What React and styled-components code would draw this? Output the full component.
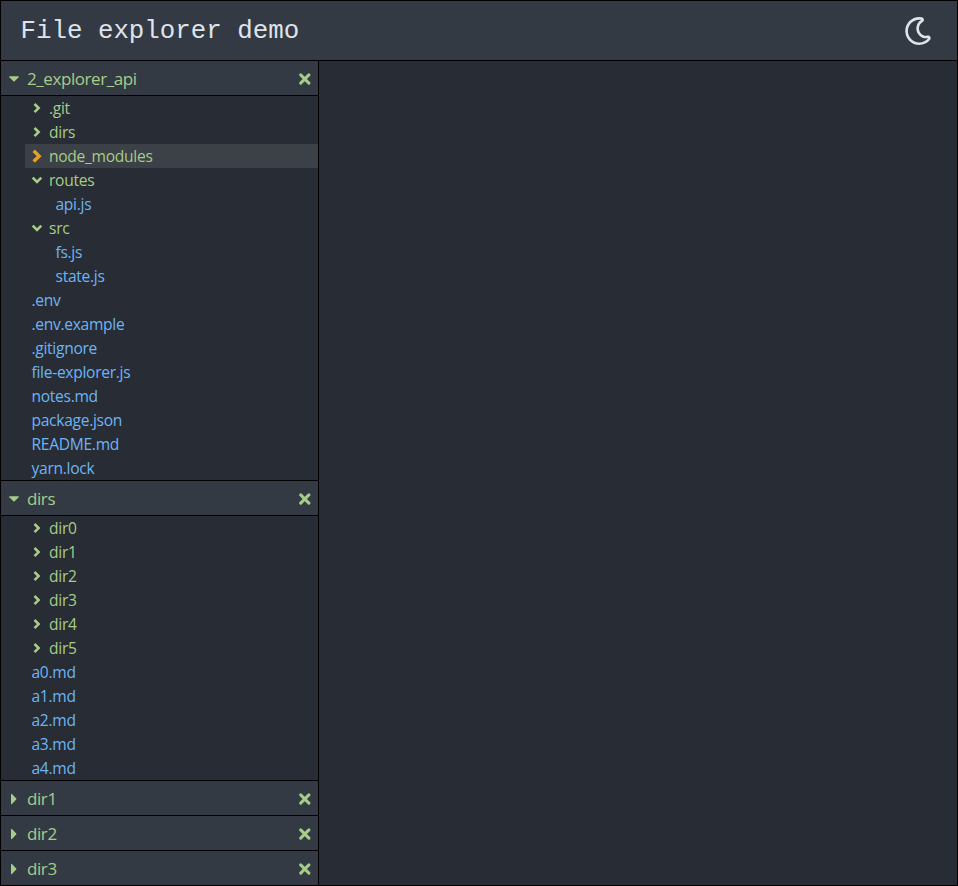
import React from 'react';
import styled, { createGlobalStyle } from 'styled-components';
import { FaRegMoon } from 'react-icons/fa';

const GlobalStyle = createGlobalStyle`
  *, *::before, *::after { box-sizing: border-box; }
  html, body { margin: 0; background: #282c34; }
`;

const Shell = styled.div`
  height: 886px;
  border: 1px solid #000;
  display: flex;
  flex-direction: column;
  overflow: hidden;
  background: #282c34;
  font-family: 'Open Sans', 'Noto Sans', sans-serif;
  color: #a5cc88;
`;

const Header = styled.header`
  flex: none;
  height: 60px;
  padding: 0 25px 0 19.5px;
  display: flex;
  align-items: center;
  justify-content: space-between;
  background: #343a43;
  border-bottom: 1px solid #000;
  color: #dfe3ea;
`;

const Title = styled.h1`
  margin: 0;
  padding-top: 3px;
  font: 400 25.8px/56px 'Liberation Mono', monospace;
`;

const ThemeButton = styled.button`
  display: flex;
  padding: 0;
  border: 0;
  background: none;
  color: inherit;
`;

const Body = styled.div`
  flex: 1;
  display: flex;
  min-height: 0;
`;

const Sidebar = styled.aside`
  width: 318px;
  border-right: 1px solid #000;
`;

const Content = styled.main`
  flex: 1;
`;

const SectionHeader = styled.div`
  height: 35px;
  padding: 1px 7px 0 6px;
  display: flex;
  align-items: center;
  background: #343a43;
  border-bottom: 1px solid #000;
  font-size: 17px;
`;

const SectionName = styled.span`
  flex: 1;
  padding: 1px 0 0 6px;
  line-height: 32px;
  letter-spacing: -0.42px;
`;

const Caret = styled.span`
  width: 14px;
  display: flex;
  justify-content: center;
`;

const Tree = styled.div`
  border-bottom: 1px solid #000;
  padding-left: 24px;
`;

const Row = styled.div`
  height: 24px;
  padding-left: ${({ $nested, $dir }) => ($nested ? 30.5 : $dir ? 6 : 6.5)}px;
  display: flex;
  align-items: center;
  font-size: 15.6px;
  line-height: 24px;
  letter-spacing: -0.3px;
  color: ${({ $dir }) => ($dir ? '#a5cc88' : '#6cb4f4')};
  background: ${({ $active }) => ($active ? '#3c4047' : 'transparent')};
`;

const Chevron = styled.span`
  width: 12px;
  margin-right: 6px;
  display: flex;
  justify-content: center;
  color: ${({ $active }) => ($active ? '#e5a11f' : 'inherit')};
`;

const Glyph = styled.svg`
  display: block;
  flex: none;
  fill: none;
  stroke: currentColor;
  stroke-width: ${({ $weight }) => $weight};
`;

const CaretGlyph = styled.svg`
  display: block;
  fill: currentColor;
`;

const dir = (name, extra) => ({ name, dir: true, ...extra });
const file = (name, nested) => ({ name, nested });

const sections = [
  {
    name: '2_explorer_api',
    items: [
      dir('.git'), dir('dirs'), dir('node_modules', { active: true }),
      dir('routes', { open: true }), file('api.js', true),
      dir('src', { open: true }), file('fs.js', true), file('state.js', true),
      ...['.env', '.env.example', '.gitignore', 'file-explorer.js', 'notes.md',
        'package.json', 'README.md', 'yarn.lock'].map((n) => file(n)),
    ],
  },
  {
    name: 'dirs',
    items: [
      ...[0, 1, 2, 3, 4, 5].map((n) => dir(`dir${n}`)),
      ...[0, 1, 2, 3, 4].map((n) => file(`a${n}.md`)),
    ],
  },
  { name: 'dir1' }, { name: 'dir2' }, { name: 'dir3' },
];

function ChevronIcon({ open, active }) {
  const size = active ? 16 : 12;
  return (
    <Glyph width={size} height={size} viewBox="0 0 12 12" $weight={2.6}>
      <path d={open ? 'M1.7 3.7 6 8 10.3 3.7' : 'M3.5 2 7.6 6.1 3.5 10.2'} />
    </Glyph>
  );
}

function CloseIcon() {
  return (
    <Glyph width="12" height="12" viewBox="0 0 12 12" $weight={3} strokeLinecap="round">
      <path d="M1.7 1.9 9.9 10.1M9.9 1.9 1.7 10.1" />
    </Glyph>
  );
}

function CaretIcon({ open }) {
  return (
    <CaretGlyph width="14" height="12" viewBox="0 0 14 12">
      <path d={open
        ? 'M2.6 3.2H11.4Q12.3 3.4 11.6 4.2L7.6 8.2Q7 8.7 6.4 8.2L2.4 4.2Q1.7 3.4 2.6 3.2Z'
        : 'M4 1.4Q4.2.4 5 1L9.2 5.4Q9.7 6 9.2 6.6L5 11Q4.2 11.6 4 10.6Z'} />
    </CaretGlyph>
  );
}

function TreeRow({ item }) {
  return (
    <Row $dir={item.dir} $nested={item.nested} $active={item.active}>
      {item.dir && (
        <Chevron $active={item.active}>
          <ChevronIcon open={item.open} active={item.active} />
        </Chevron>
      )}
      {item.name}
    </Row>
  );
}

export default function App() {
  return (
    <Shell>
      <GlobalStyle />
      <Header>
        <Title>File explorer demo</Title>
        <ThemeButton aria-label="Toggle theme"><FaRegMoon size={28} /></ThemeButton>
      </Header>
      <Body>
        <Sidebar>
          {sections.map(({ name, items }) => (
            <section key={name}>
              <SectionHeader>
                <Caret><CaretIcon open={Boolean(items)} /></Caret>
                <SectionName>{name}</SectionName>
                <CloseIcon />
              </SectionHeader>
              {items && <Tree>{items.map((item) => <TreeRow key={item.name} item={item} />)}</Tree>}
            </section>
          ))}
        </Sidebar>
        <Content />
      </Body>
    </Shell>
  );
}
